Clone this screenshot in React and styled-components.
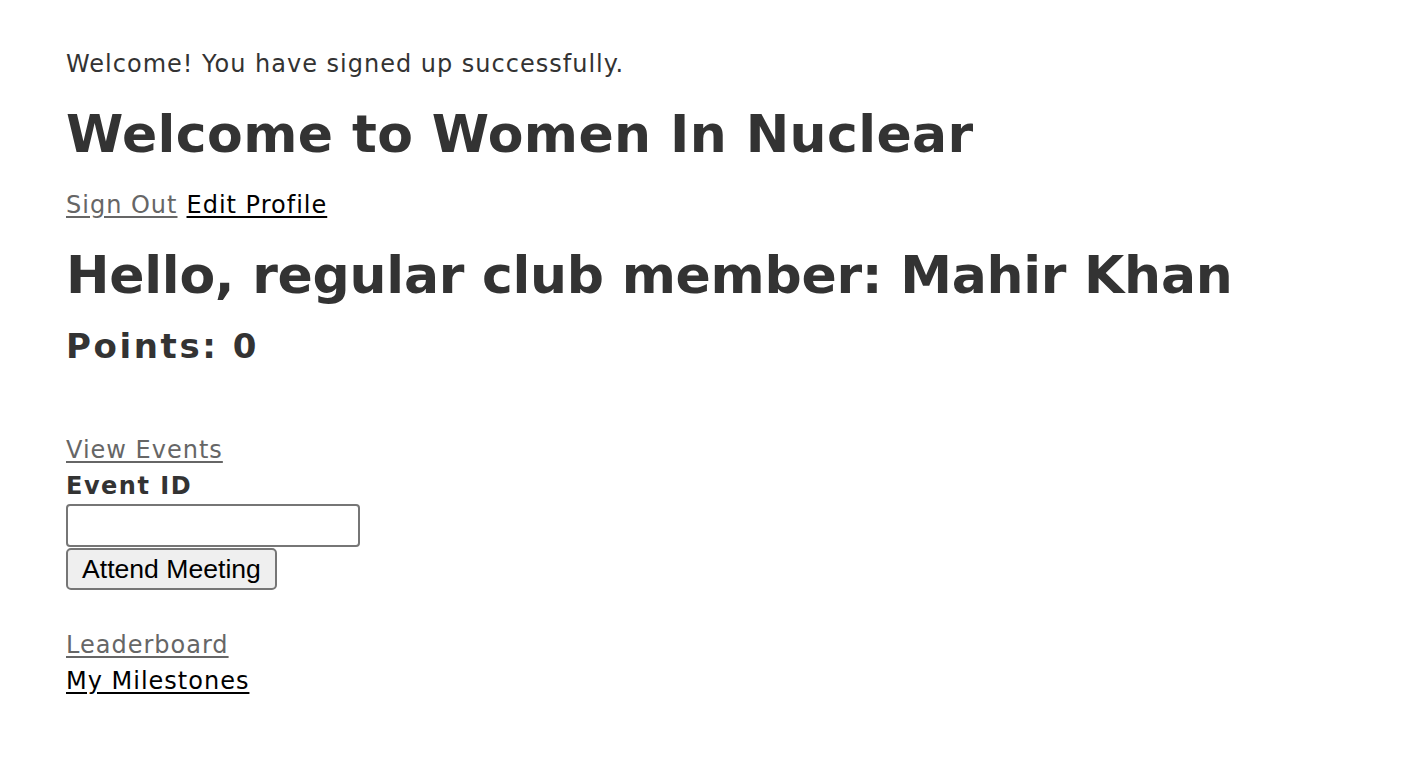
import React, { useState } from 'react';
import styled, { createGlobalStyle } from 'styled-components';

const GlobalStyle = createGlobalStyle`
  html, body {
    margin: 0;
    padding: 0;
    background: #fff;
  }
  body {
    font-family: Verdana, "DejaVu Sans", sans-serif;
    color: #333;
  }
`;

const Page = styled.div`
  padding: 46px 66px 40px;
  display: flex;
  flex-direction: column;
  align-items: flex-start;
`;

const Notice = styled.p`
  margin: 0;
  font-size: 24px;
  letter-spacing: 1px;
  line-height: 36px;
`;

const Title = styled.h1`
  margin: ${p => p.$top || 0}px 0 0;
  font-size: 52px;
  line-height: 62px;
  font-weight: bold;
  letter-spacing: ${p => p.$spacing || 0}px;
  white-space: nowrap;
`;

const Sub = styled.h2`
  margin: 21px 0 0;
  font-size: 34px;
  letter-spacing: 2.6px;
  line-height: 38px;
  font-weight: bold;
`;

const LinkRow = styled.div`
  margin-top: ${p => p.$top || 0}px;
  display: flex;
  gap: 9px;
  font-size: 24px;
  letter-spacing: 1px;
  line-height: 36px;
`;

const NavLink = styled.a`
  color: ${p => (p.$visited ? '#666' : '#000')};
  text-decoration: underline;
  text-underline-offset: 3px;
  cursor: pointer;
`;

const Form = styled.form`
  display: flex;
  flex-direction: column;
  align-items: flex-start;
`;

const Label = styled.label`
  font-size: 24px;
  letter-spacing: 1.5px;
  line-height: 36px;
  font-weight: bold;
`;

const TextInput = styled.input`
  box-sizing: border-box;
  width: 294px;
  height: 43px;
  margin: 0;
  border: 2px solid #767676;
  border-radius: 4px;
  background: #fff;
  font-size: 22px;
  padding: 2px 6px;
`;

const Button = styled.button`
  box-sizing: border-box;
  margin: 1px 0 0;
  width: 211px;
  height: 42px;
  padding: 0 14px;
  border: 2px solid #767676;
  border-radius: 5px;
  background: #efefef;
  color: #000;
  font-family: "Liberation Sans", Arial, sans-serif;
  font-size: 26.6px;
  text-align: left;
  white-space: nowrap;
`;

export default function App() {
  const [eventId, setEventId] = useState('');

  return (
    <>
      <GlobalStyle />
      <Page>
        <Notice>Welcome! You have signed up successfully.</Notice>
        <Title $top={21} $spacing={0.4}>Welcome to Women In Nuclear</Title>
        <LinkRow $top={22}>
          <NavLink $visited>Sign Out</NavLink>
          <NavLink>Edit Profile</NavLink>
        </LinkRow>
        <Title $top={21} $spacing={-0.26}>Hello, regular club member: Mahir Khan</Title>
        <Sub>Points: 0</Sub>

        <LinkRow $top={67}>
          <NavLink $visited>View Events</NavLink>
        </LinkRow>
        <Form onSubmit={e => e.preventDefault()}>
          <Label htmlFor="event-id">Event ID</Label>
          <TextInput
            id="event-id"
            type="text"
            value={eventId}
            onChange={e => setEventId(e.target.value)}
          />
          <Button type="submit">Attend Meeting</Button>
        </Form>

        <LinkRow $top={37}>
          <NavLink $visited>Leaderboard</NavLink>
        </LinkRow>
        <LinkRow>
          <NavLink>My Milestones</NavLink>
        </LinkRow>
      </Page>
    </>
  );
}
